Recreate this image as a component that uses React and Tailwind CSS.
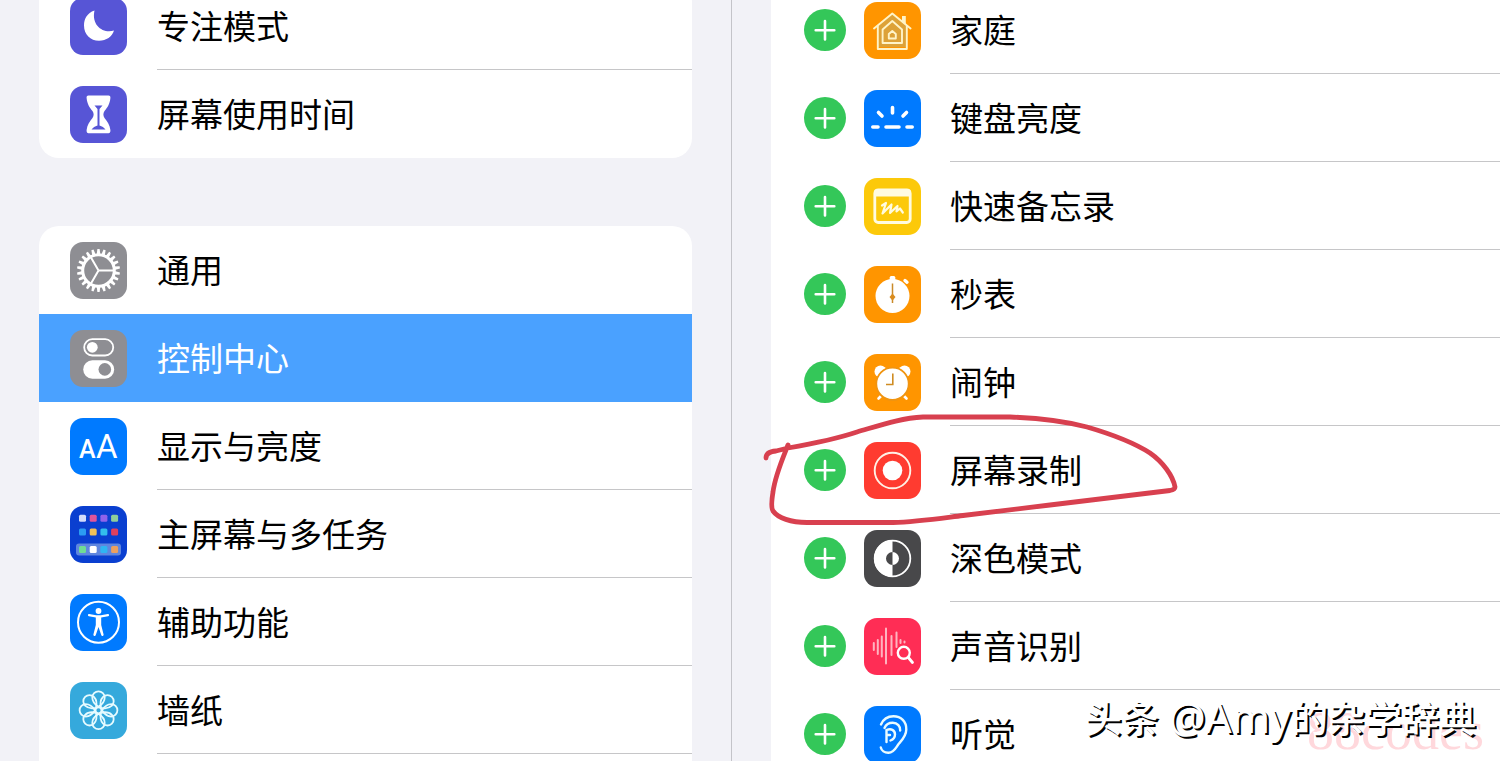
import React from 'react';

const WHITE = '#ffffff';

function Tile({ className, children }) {
  return (
    <span className={`block size-[57px] shrink-0 overflow-hidden rounded-[13px] ${className}`}>
      <svg viewBox="0 0 57 57" className="block size-full" fill="none" aria-hidden="true">
        {children}
      </svg>
    </span>
  );
}

function MoonIcon() {
  return (
    <Tile className="bg-[#5755d6]">
      <path
        d="M24.5 12.5C17 15 14 21 14 27.5C14 36.5 20.5 42.8 29 42.8C36.5 42.8 42 38.5 44 32.5C34 36 21 28 24.5 12.5Z"
        fill={WHITE}
      />
    </Tile>
  );
}

function HourglassIcon() {
  return (
    <Tile className="bg-[#5755d6]">
      <path
        d="M18.5 9.5H38.5C40 9.5 40.6 10.5 40.4 12C39.8 18 37.5 21.5 34.5 25C33 27 33 30 34.5 32C37.5 35.5 39.8 39 40.4 44C40.6 46 40 47.2 38.5 47.2H18.5C17 47.2 16.4 46 16.6 44C17.2 39 19.5 35.5 22.5 32C24 30 24 27 22.5 25C19.5 21.5 17.2 18 16.6 12C16.4 10.5 17 9.5 18.5 9.5Z"
        fill={WHITE}
      />
      <path d="M24.5 19.5H32.5L29.5 23V39.5C32 40.3 34 41.5 35.5 43.5H21.5C23 41.5 25 40.3 27.5 39.5V23Z" fill="#5755d6" />
    </Tile>
  );
}

function GearIcon() {
  const teeth = Array.from({ length: 22 }, (_, i) => (i * 360) / 22);
  return (
    <Tile className="bg-[#8e8e93]">
      <circle cx="28.5" cy="28.5" r="15.8" stroke={WHITE} strokeWidth="3" />
      {teeth.map((a) => (
        <path key={a} d="M26.7 12.5L27.4 7H29.6L30.3 12.5Z" fill={WHITE} transform={`rotate(${a} 28.5 28.5)`} />
      ))}
      <path d="M28.5 28.5H44M28.5 28.5L20.7 15M28.5 28.5L20.7 42" stroke={WHITE} strokeWidth="2" />
    </Tile>
  );
}

function TogglesIcon() {
  return (
    <Tile className="bg-[#8e8e93]">
      <rect x="14.2" y="9.2" width="29" height="16.3" rx="8.1" stroke={WHITE} strokeWidth="1.8" />
      <circle cx="22.3" cy="17.3" r="5.4" fill={WHITE} />
      <rect x="13.2" y="30.2" width="31" height="18.5" rx="9.2" fill={WHITE} />
      <circle cx="34.8" cy="39.4" r="6.3" fill="#8e8e93" />
    </Tile>
  );
}

function TextSizeIcon() {
  return (
    <Tile className="bg-[#007aff]">
      <g fill={WHITE} fontFamily="Roboto, sans-serif">
        <text x="9" y="40" fontSize="25" fontWeight="500">A</text>
        <text x="26" y="40" fontSize="33">A</text>
      </g>
    </Tile>
  );
}

function HomeScreenIcon() {
  const rows = [
    [12.2, ['#d3dcfa', '#e0559a', '#8f63ea', '#8fce9a']],
    [26, ['#2b9cf2', '#f0c05a', '#33bdec', '#e0405e']],
    [43.5, ['#6fdc94', '#ffffff', '#2fb4f2', '#eca05e']],
  ];
  return (
    <Tile className="bg-[#0a3fd0]">
      <rect x="6" y="37.5" width="45" height="12" rx="3" fill="#5f86df" />
      {rows.map(([y, colors]) =>
        colors.map((c, i) => (
          <rect key={`${y}-${i}`} x={9 + i * 10.7} y={y - 3.5} width="7" height="7" rx="1.5" fill={c} />
        ))
      )}
    </Tile>
  );
}

function AccessibilityIcon() {
  return (
    <Tile className="bg-[#007aff]">
      <circle cx="28.5" cy="28.3" r="20.5" stroke={WHITE} strokeWidth="2" />
      <circle cx="28.5" cy="17" r="2.9" fill={WHITE} />
      <path
        d="M19 21.2L26 22.3H31L38 21.2M28.5 22.5V31"
        stroke={WHITE}
        strokeWidth="2.2"
        strokeLinecap="round"
        strokeLinejoin="round"
      />
      <path d="M25.8 22H31.2V31L33.6 40.5C33.9 42 31.8 42.6 31.3 41.2L28.5 33L25.7 41.2C25.2 42.6 23.1 42 23.4 40.5L25.8 31Z" fill={WHITE} />
    </Tile>
  );
}

function FlowerIcon() {
  const petals = [0, 45, 90, 135, 180, 225, 270, 315];
  return (
    <Tile className="bg-[#35a9dc]">
      <g transform="translate(28.5 28.3)" stroke="#e6fbff" strokeWidth="1.8">
        {petals.map((a) => (
          <path key={a} d="M0 -3.5C-4 -6 -6.2 -9.5 -6.2 -12.7A6.2 6.2 0 0 1 6.2 -12.7C6.2 -9.5 4 -6 0 -3.5Z" transform={`rotate(${a})`} />
        ))}
        <circle r="3" />
      </g>
    </Tile>
  );
}

function HomeIcon() {
  return (
    <Tile className="bg-[#ff9500]">
      <path d="M28.3 12L43 24V45H14V24Z" fill="#dda238" />
      <path d="M38 20V14H41.8V23Z" fill="#fff4c8" />
      <g stroke="#fff4c8" strokeWidth="1.9" strokeLinecap="round" strokeLinejoin="round">
        <path d="M10 26.5L28.3 11.5L46.6 26.5" />
        <path d="M13.8 24V47H42.8V24" />
        <path d="M28.3 19L38 27.5V41H18.6V27.5Z" />
        <path d="M28.3 29L31.8 32V36.5H24.8V32Z" />
      </g>
    </Tile>
  );
}

function KeyboardLightIcon() {
  return (
    <Tile className="bg-[#007aff]">
      <path
        d="M8.8 37H14M22 37H35M43 37H48.2M28.5 17.5V23M14.5 22.5L18 26M42.5 22.5L39 26"
        stroke={WHITE}
        strokeWidth="3.6"
        strokeLinecap="round"
      />
    </Tile>
  );
}

function NoteIcon() {
  return (
    <Tile className="bg-[#fcc90a]">
      <rect x="10.8" y="12" width="35.4" height="32.5" rx="3.5" stroke="#fffbe0" strokeWidth="2.8" />
      <path d="M10 18.5V14Q10 11 13 11H44Q47 11 47 14V18.5Z" fill="#fffbe0" />
      <path
        d="M18 27.5L22 25L18.5 35.5L27.5 26.5L26 35L33.5 28L32.5 33.5L36 30.5L38.8 34.5"
        stroke="#fffbe0"
        strokeWidth="2.2"
        strokeLinecap="round"
        strokeLinejoin="round"
      />
    </Tile>
  );
}

function StopwatchIcon() {
  return (
    <Tile className="bg-[#ff9500]">
      <circle cx="28.5" cy="30" r="17" fill={WHITE} />
      <path d="M25.7 14V11.5Q25.7 10 27.2 10H29.8Q31.3 10 31.3 11.5V14Z" fill={WHITE} />
      <path d="M41 14.5L43 16.2" stroke={WHITE} strokeWidth="3.4" strokeLinecap="round" />
      <path d="M28.5 17.5V37" stroke="#c98a2a" strokeWidth="1.5" />
      <path d="M28.5 27.5L31.5 31L28.5 34.8L25.5 31Z" fill="#d98c1f" />
    </Tile>
  );
}

function AlarmIcon() {
  return (
    <Tile className="bg-[#ff9500]">
      <circle cx="16.5" cy="17.5" r="6" fill={WHITE} />
      <circle cx="40.5" cy="17.5" r="6" fill={WHITE} />
      <path d="M19 40L14.5 44.5M38 40L42.5 44.5" stroke={WHITE} strokeWidth="2.6" strokeLinecap="round" />
      <circle cx="28.5" cy="29.8" r="16.2" fill={WHITE} stroke="#f09410" strokeWidth="1.8" />
      <path d="M28.8 19.5V30.5H22" stroke="#cf8c22" strokeWidth="1.6" />
    </Tile>
  );
}

function RecordIcon() {
  return (
    <Tile className="bg-[#ff3b30]">
      <circle cx="28.5" cy="28.5" r="17.8" stroke="#fff1e6" strokeWidth="1.9" />
      <circle cx="28.5" cy="28.5" r="9.8" fill={WHITE} />
    </Tile>
  );
}

function DarkModeIcon() {
  return (
    <Tile className="bg-[#48484a]">
      <circle cx="28.5" cy="28.5" r="17.8" stroke={WHITE} strokeWidth="1.8" />
      <path d="M28.5 10A18.5 18.5 0 0 0 28.5 47V35A6.5 6.5 0 0 1 28.5 22Z" fill={WHITE} />
      <path d="M28.5 22A6.5 6.5 0 0 1 28.5 35Z" fill={WHITE} />
    </Tile>
  );
}

function SoundSearchIcon() {
  return (
    <Tile className="bg-[#ff2d55]">
      <path
        d="M9.8 25V32M13.8 22V36M17.8 18.5V38.5M22 10.5V45.5M27.5 18V37M32.5 14.5V29M36.5 22V25M40.5 23.5V24.5"
        stroke="#ffb3bf"
        strokeWidth="2"
        strokeLinecap="round"
      />
      <circle cx="39.8" cy="34.8" r="6" stroke={WHITE} strokeWidth="2.4" />
      <path d="M44.3 39.5L48.5 44.5" stroke={WHITE} strokeWidth="2.8" strokeLinecap="round" />
    </Tile>
  );
}

function EarIcon() {
  return (
    <Tile className="bg-[#007aff]">
      <g stroke="#e9fbff" strokeWidth="2.4" strokeLinecap="round">
        <path d="M17 18.5C19.5 12.5 24 10.2 29.5 10.2C37 10.2 42.5 15.5 42.3 23.5C42.2 30 38.5 33.5 35 37.5C32 41 30.5 46.5 24.5 46.8C20.5 46.9 17.5 44.5 16.8 41.5" />
        <path d="M20.5 22C22 18.5 25 16.8 28.8 16.8C33.5 16.8 36.5 20.5 36.2 24.5" />
        <path d="M22.5 36V24C27 22 31 24 31 28.5C31 31.5 29 33.5 26.5 34.5M22.5 29H26" />
      </g>
    </Tile>
  );
}

const topGroup = [
  { label: '专注模式', Icon: MoonIcon },
  { label: '屏幕使用时间', Icon: HourglassIcon, plain: true },
];

const mainGroup = [
  { label: '通用', Icon: GearIcon, plain: true },
  { label: '控制中心', Icon: TogglesIcon, selected: true, plain: true },
  { label: '显示与亮度', Icon: TextSizeIcon },
  { label: '主屏幕与多任务', Icon: HomeScreenIcon },
  { label: '辅助功能', Icon: AccessibilityIcon },
  { label: '墙纸', Icon: FlowerIcon },
];

const controls = [
  { label: '家庭', Icon: HomeIcon },
  { label: '键盘亮度', Icon: KeyboardLightIcon },
  { label: '快速备忘录', Icon: NoteIcon },
  { label: '秒表', Icon: StopwatchIcon },
  { label: '闹钟', Icon: AlarmIcon },
  { label: '屏幕录制', Icon: RecordIcon, circled: true },
  { label: '深色模式', Icon: DarkModeIcon },
  { label: '声音识别', Icon: SoundSearchIcon },
  { label: '听觉', Icon: EarIcon },
];

function NavGroup({ items, className }) {
  return (
    <ul className={`overflow-hidden bg-white ${className}`}>
      {items.map(({ label, Icon, selected, plain }) => (
        <li key={label}>
          <button
            type="button"
            aria-current={selected ? 'page' : undefined}
            className={`flex h-22 w-full items-center gap-[30px] pl-[31px] text-left ${selected ? 'bg-[#4aa1ff] text-white' : ''}`}
          >
            <Icon />
            <span className={`flex h-full flex-1 items-center border-b pt-[3px] ${plain ? 'border-transparent' : 'border-[#c6c6c8]'}`}>
              {label}
            </span>
          </button>
        </li>
      ))}
    </ul>
  );
}

function PenCircle() {
  return (
    <svg
      viewBox="0 0 420 120"
      className="pointer-events-none absolute -top-4 -left-2.5 h-[120px] w-[420px]"
      fill="none"
      aria-hidden="true"
    >
      <path
        d="M5 48C5 43 9 41.5 15 41L27 38C50 34 72 30 96 22C120 15 140 8 162 7H249C278 8 303 11 326 17C350 24 372 32 389 43C402 52 412 66 414 77C414 79 412 80 409 80.5L289 95L202 105.500C178 108.5 155 112 132 112.5H46C30 112.5 17 108 12 101C10 98 11 88 12 82C14 66 21 50 27 35"
        stroke="#d8404f"
        strokeWidth="4.8"
        strokeLinecap="round"
        strokeLinejoin="round"
      />
    </svg>
  );
}

function ControlRow({ label, Icon, circled }) {
  return (
    <li className="relative flex h-22 items-center pl-[33px]">
      <button
        type="button"
        aria-label={`添加${label}`}
        className="flex size-[42px] shrink-0 items-center justify-center rounded-full bg-[#34c759]"
      >
        <svg viewBox="0 0 42 42" className="size-full" aria-hidden="true">
          <path d="M21 12V30.5M11.7 21.2H30.3" stroke={WHITE} strokeWidth="2.6" strokeLinecap="round" />
        </svg>
      </button>
      <span className="ml-[18px]">
        <Icon />
      </span>
      <span className="ml-[29px] flex h-full flex-1 items-center border-b border-[#c6c6c8] pt-[3px]">{label}</span>
      {circled && <PenCircle />}
    </li>
  );
}

export default function App() {
  return (
    <div className="relative flex h-screen overflow-hidden bg-[#f2f2f7] font-['Inter','Noto_Sans_CJK_SC',sans-serif] text-[33px] leading-10 text-black">
      <nav aria-label="设置" className="w-[732px] shrink-0 overflow-hidden border-r border-[#c4c4c9] pr-[39px] pl-[39px]">
        <NavGroup items={topGroup} className="-mt-[18px] rounded-[20px]" />
        <NavGroup items={mainGroup} className="mt-[68px] rounded-t-[20px] pb-22" />
      </nav>
      <main className="min-w-0 flex-1 overflow-hidden pl-[39px]">
        <ul className="-mt-3.5 bg-white">
          {controls.map((c) => (
            <ControlRow key={c.label} {...c} />
          ))}
        </ul>
      </main>
      <p className="pointer-events-none absolute right-4 bottom-0 font-['Liberation_Serif',serif] text-[54px] leading-[60px] text-[#ff3b4e]/20">
        88codes
      </p>
      <p className="pointer-events-none absolute right-6 bottom-5 flex items-baseline font-['Noto_Sans_CJK_SC',sans-serif] text-[37px] leading-12 font-medium whitespace-nowrap text-white [text-shadow:2px_2px_0_#000]">
        <span>头条</span>
        <span className="ml-2.5 font-['Noto_Sans',sans-serif] text-[41px] font-normal">@Amy</span>
        <span>的杂学辞典</span>
      </p>
    </div>
  );
}
